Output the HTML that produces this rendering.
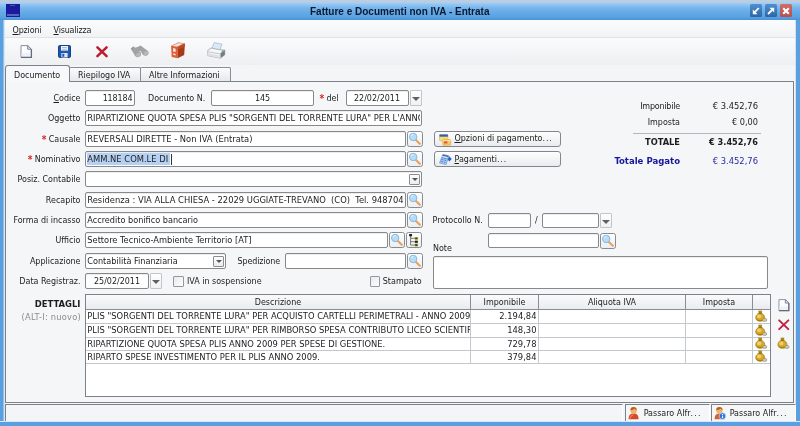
<!DOCTYPE html><html><head><meta charset="utf-8"><title>Fatture e Documenti non IVA - Entrata</title><style>
*{box-sizing:border-box;margin:0;padding:0}
html,body{width:800px;height:426px;overflow:hidden;background:#f4f5f7}
body{position:relative;font-family:"DejaVu Sans Condensed","Liberation Sans",sans-serif;font-size:8.9px;color:#1c1c1c;line-height:12px}
.a{position:absolute;white-space:pre}
.t{position:absolute;white-space:pre;height:12px}
.r{text-align:right}
.U{font-size:9.3px}
.inp{position:absolute;background:#fff;border:1px solid #86888b;border-radius:2px;height:16px;box-shadow:inset 0 1px 0 rgba(0,0,0,.07)}
.clip{position:absolute;overflow:hidden;height:12px;white-space:pre}
.ibtn{position:absolute;width:16px;height:16px;border:1px solid #878a8e;border-radius:2.5px;background:linear-gradient(#fefefe,#eceef1)}
.ibtn svg{position:absolute;left:0;top:0}
.dd{position:absolute;width:12px;height:16px;border:1px solid #c2c5c9;border-radius:1px;background:linear-gradient(#ffffff,#f0f1f3)}
.dd:after{content:"";position:absolute;left:1px;top:6px;border:4px solid transparent;border-top:4px solid #606060;border-bottom:0}
.cbx{position:absolute;width:11px;height:11px;border:1px solid #8f9398;border-radius:1px;background:#fff}
.cb{position:absolute;width:11px;height:11px;border:1px solid #94989e;border-radius:1px;background:linear-gradient(135deg,#e9eaec,#fdfdfd)}
.red{color:#d82424;font-size:10px;font-weight:bold;margin-right:2.3px;position:relative;top:1px}
.btn{position:absolute;height:16px;border:1px solid #83878d;border-radius:3px;background:linear-gradient(#fefefe,#e9ebee)}
.ic{position:absolute;overflow:visible}
u{text-decoration:underline}
</style></head><body><div id="w" style="position:absolute;left:0;top:0;width:800px;height:426px;will-change:transform">
<div class="a" style="left:0;top:0;width:800px;height:21px;background:linear-gradient(#c8ccd1 0,#bccde0 1.4px,#a8d0f6 2.4px,#92c6f2 4.5px,#76b5ec 8px,#63a9e6 13px,#5aa2e2 17px,#5096da 19px,#4a8fd4 20.5px)"></div>
<div class="a" style="left:310px;top:6px;font-family:'Liberation Sans',sans-serif;font-weight:bold;font-size:10px;color:#0c1830">Fatture e Documenti non IVA - Entrata</div>
<div class="a" style="left:0;top:20px;width:5px;height:406px;background:linear-gradient(90deg,#5aa0e0 0,#5aa0e0 3px,#cfe3f6 4px,#dbe9f7 5px)"></div>
<div class="a" style="left:795px;top:20px;width:5px;height:406px;background:linear-gradient(90deg,#cfe3f6 0,#cfe3f6 1px,#5aa0e0 1px)"></div>
<div class="a" style="left:0;top:421px;width:800px;height:5px;background:linear-gradient(#d6e8f8 0,#d6e8f8 1px,#5aa0e0 1px)"></div>
<div class="a" style="left:6px;top:4px;width:14px;height:13px;background:#1a1a9a"></div>
<div class="a" style="left:7px;top:14px;width:12px;height:2px;background:#6a74c8;opacity:.8"></div>
<div class="a" style="left:10px;top:5px;width:5px;height:1px;background:#5a64b8;opacity:.8"></div>
<div class="a" style="left:750px;top:4px;width:12px;height:13px;border-radius:1.5px;background:linear-gradient(#4f8fd0,#2c65a4)"><svg width="12" height="12" viewBox="0 0 12 12" style="position:absolute;left:0;top:.5px"><path d="M8.8 3L3.8 8.2" stroke="#fff" stroke-width="1.8"/><path d="M2.8 4.4v4.8h4.8z" fill="#fff"/></svg></div>
<div class="a" style="left:765px;top:4px;width:12px;height:13px;border-radius:1.5px;background:linear-gradient(#4f8fd0,#2c65a4)"><svg width="12" height="12" viewBox="0 0 12 12" style="position:absolute;left:0;top:.5px"><path d="M3 9L8.2 3.8" stroke="#fff" stroke-width="1.8"/><path d="M4.4 2.8h4.8v4.8z" fill="#fff"/></svg></div>
<div class="a" style="left:780px;top:4px;width:12px;height:13px;border-radius:1.5px;background:linear-gradient(#cc7068,#b4504c)"><svg width="12" height="12" viewBox="0 0 12 12" style="position:absolute;left:0;top:.5px"><path d="M3.2 3.2l5.6 5.6M8.8 3.2l-5.6 5.6" stroke="#fff" stroke-width="2.1"/></svg></div>
<div class="a" style="left:5px;top:20px;width:790px;height:18px;background:linear-gradient(#fbfcfd,#f0f2f5)"></div>
<div class="a" style="left:5px;top:37px;width:790px;height:1px;background:#e0e2e6"></div>
<div class="t " style="left:12.5px;top:24px;letter-spacing:-.15px"><u>O</u>pzioni</div>
<div class="t " style="left:53.5px;top:24px;letter-spacing:-.15px"><u>V</u>isualizza</div>
<div class="a" style="left:5px;top:38px;width:790px;height:27px;background:linear-gradient(#fbfbfc,#eeeff2)"></div>
<svg class="ic" style="left:20px;top:44.5px" width="12.6" height="13.2" viewBox="0 0 12.6 13.2"><path d="M1 .6h6.7l3.7 3.7v8H1z" fill="#fdfdfe" stroke="#8a90a2" stroke-width="1"/><path d="M1.6 8h9.2v4.3H1.6z" fill="#eef1f7"/><path d="M11.4 4.3v8H1" fill="none" stroke="#646b7e" stroke-width="1.3"/><path d="M7.7 .6v3.7h3.7z" fill="#dfe4ee" stroke="#747b8e" stroke-width=".9"/></svg>
<svg class="ic" style="left:57.5px;top:44.5px" width="13" height="13" viewBox="0 0 13 13"><rect x=".5" y=".5" width="12" height="12" rx="1.2" fill="#1f58b0" stroke="#163f86"/><rect x="3" y="1" width="7" height="4.6" fill="#f2f5fa"/><rect x="4" y="2.2" width="5" height=".8" fill="#9fb0c8"/><rect x="4" y="3.8" width="5" height=".8" fill="#9fb0c8"/><rect x="3.4" y="8" width="6.2" height="4.5" fill="#dfe6f2"/><rect x="4.3" y="8.8" width="2" height="3" fill="#1f58b0"/></svg>
<svg class="ic" style="left:95.5px;top:45.5px" width="12" height="11.6" viewBox="0 0 12 11.6"><path d="M1.4 1.4L10.6 10.2M10.6 1.4L1.4 10.2" stroke="#bc1c2e" stroke-width="2.5" stroke-linecap="round"/></svg>
<svg class="ic" style="left:130px;top:45px" width="19" height="12" viewBox="0 0 19 12.5"><g fill="#a3a3a3"><path d="M8.2 2.6L10.6 .6 18.6 6.6Q19.8 9.4 17.4 10.9 14.6 12 13 10.2z"/><path d="M.4 4L3 1.4 10.8 7.8Q12 10.8 9.4 12.3 6.6 13.3 5 11.4z"/><path d="M4 3l5-1.4 3 4-5 1.5z"/></g><ellipse cx="8.3" cy="10" rx="2.7" ry="1.9" fill="#b7b7b7" transform="rotate(-32 8.3 10)"/><ellipse cx="16.3" cy="8.6" rx="2.7" ry="1.9" fill="#b7b7b7" transform="rotate(-32 16.3 8.6)"/><path d="M1.2 4.2L3 2.4" stroke="#8c8c8c" stroke-width="1"/><path d="M8.8 2.8L10.5 1.4" stroke="#8c8c8c" stroke-width="1"/></svg>
<svg class="ic" style="left:171px;top:41.5px" width="14" height="16.5" viewBox="0 0 14 16.5"><path d="M.1 3.8L7.3 .2l6.6 1.2L6.6 5.1z" fill="#d08468"/><path d="M1.6 3.7L7.4 .9l4.6.9L6.7 4.5z" fill="#f1e2da"/><path d="M.1 3.8L6.6 5.1v11.2L.7 14.9z" fill="#e25c34"/><path d="M6.6 5.1L13.9 1.4l-.7 11.6L6.6 16.3z" fill="#a83818"/><path d="M6.6 5.1L13.9 1.4l-.2 3L6.6 8.2z" fill="#be4824"/><path d="M2.1 6.1l2.5.6v3.4l-2.5-.7z" fill="#f8ece6"/><path d="M2.2 11.2l2.4.7v1.6l-2.4-.7z" fill="#f8ece6"/></svg>
<svg class="ic" style="left:206.5px;top:42px" width="18.5" height="16.5" viewBox="0 0 18.5 16.5"><path d="M4.6 7L7.2 .6l7.8 1.6-2.2 6z" fill="#d6ebfa" stroke="#a6b6c6" stroke-width=".7"/><path d="M.8 8.4l3.2-2.4 9.2 1.8 4.6.2v4.8l-4.4 3.4L.8 13.6z" fill="#f6f7f8" stroke="#a0a4aa" stroke-width=".8"/><path d="M13.4 11.4l4.4-3.2v4.6l-4.4 3.4z" fill="#777b80"/><path d="M.8 11l12.6 2.4v2.8L.8 13.6z" fill="#dfe1e4"/><path d="M13.4 11.4l4.4-3.2" stroke="#9a9ea4" stroke-width=".8"/><circle cx="15.6" cy="9.2" r=".9" fill="#58b058"/><path d="M1.6 9.8l11.4 2.1" stroke="#b6babf" stroke-width=".8"/></svg>
<div class="a" style="left:5px;top:81px;width:789px;height:322px;border:1px solid #7e8288;background:#f5f6f8"></div>
<div class="a" style="left:69px;top:67px;width:72px;height:15px;border:1px solid #8a8e94;border-bottom-color:#7e8288;border-radius:2px 2px 0 0;background:linear-gradient(#fcfcfd,#e6e8eb)"></div>
<div class="a" style="left:140px;top:67px;width:91px;height:15px;border:1px solid #8a8e94;border-bottom-color:#7e8288;border-radius:2px 2px 0 0;background:linear-gradient(#fcfcfd,#e6e8eb)"></div>
<div class="a" style="left:5px;top:65px;width:65px;height:17px;border:1px solid #7e8288;border-bottom:0;border-radius:3px 3px 0 0;background:#f7f8fa"></div>
<div class="t " style="left:14px;top:69px;">Documento</div>
<div class="t " style="left:78px;top:69px;">Riepilogo IVA</div>
<div class="t " style="left:149px;top:69px;">Altre Informazioni</div>
<div class="t r " style="right:719.5px;top:92px;"><u>C</u>odice</div>
<div class="t r " style="right:719.5px;top:112px;">Oggetto</div>
<div class="t r " style="right:719.5px;top:133px;"><span class="red">*</span>Causale</div>
<div class="t r " style="right:719.5px;top:153px;"><span class="red">*</span>Nominativo</div>
<div class="t r " style="right:719.5px;top:173px;">Posiz. Contabile</div>
<div class="t r " style="right:719.5px;top:194px;">Recapito</div>
<div class="t r " style="right:719.5px;top:214px;">Forma di incasso</div>
<div class="t r " style="right:719.5px;top:234px;">Ufficio</div>
<div class="t r " style="right:719.5px;top:255px;">Applicazione</div>
<div class="t r " style="right:719.5px;top:275px;">Data Registraz.</div>
<div class="inp" style="left:85px;top:90px;width:50px;height:16px"></div>
<div class="clip " style="left:87px;top:92px;width:45.5px;text-align:right;letter-spacing:-.1px">118184</div>
<div class="t " style="left:148px;top:92px;">Documento N.</div>
<div class="inp" style="left:211px;top:90px;width:103px;height:16px"></div>
<div class="clip " style="left:212px;top:92px;width:101px;text-align:center;">145</div>
<div class="t " style="left:319.5px;top:92px;"><span class="red">*</span>del</div>
<div class="inp" style="left:346px;top:90px;width:63px;height:16px"></div>
<div class="clip " style="left:347px;top:92px;width:60px;text-align:center;">22/02/2011</div>
<div class="dd" style="left:410px;top:90px;width:12px"></div>
<div class="inp" style="left:85px;top:110px;width:337px;height:16px"></div>
<div class="clip U" style="left:87.3px;top:112px;width:333px;text-align:left;">RIPARTIZIONE QUOTA SPESA PLIS "SORGENTI DEL TORRENTE LURA" PER L'ANNO 2009</div>
<div class="inp" style="left:85px;top:131px;width:321px;height:16px"></div>
<div class="clip U" style="left:87.3px;top:133px;width:317px;text-align:left;">REVERSALI DIRETTE - Non IVA (Entrata)</div>
<div class="inp" style="left:85px;top:151px;width:321px;height:16px"></div>
<div class="a" style="left:87px;top:153px;width:82.5px;height:12px;background:#b4d1f3"></div>
<div class="clip U" style="left:87.3px;top:153px;width:317px;text-align:left;">AMM.NE COM.LE DI </div>
<div class="a" style="left:171px;top:154px;width:1px;height:11px;background:#333"></div>
<div class="inp" style="left:85px;top:171px;width:337px;height:16px"></div>
<div class="a" style="left:409px;top:174px;width:11px;height:11px;border:1px solid #8a8e94;border-radius:1px;background:linear-gradient(#fdfdfd,#ececee)"></div>
<div class="a" style="left:411.5px;top:178px;border:3px solid transparent;border-top:3.5px solid #555;border-bottom:0"></div>
<div class="inp" style="left:85px;top:192px;width:321px;height:16px"></div>
<div class="clip U" style="left:87.3px;top:194px;width:317px;text-align:left;">Residenza : VIA ALLA CHIESA - 22029 UGGIATE-TREVANO  (CO)  Tel. 948704</div>
<div class="inp" style="left:85px;top:212px;width:321px;height:16px"></div>
<div class="clip " style="left:87.3px;top:214px;width:317px;text-align:left;font-size:9.05px">Accredito bonifico bancario</div>
<div class="inp" style="left:85px;top:232px;width:303px;height:16px"></div>
<div class="clip " style="left:87.3px;top:234px;width:299px;text-align:left;font-size:9.2px">Settore Tecnico-Ambiente Territorio [AT]</div>
<div class="inp" style="left:85px;top:253px;width:141px;height:16px"></div>
<div class="clip " style="left:87.3px;top:255px;width:120px;text-align:left;font-size:9.05px">Contabilità Finanziaria</div>
<div class="a" style="left:213px;top:256px;width:11px;height:11px;border:1px solid #8a8e94;border-radius:1px;background:linear-gradient(#fdfdfd,#ececee)"></div>
<div class="a" style="left:215.5px;top:260px;border:3px solid transparent;border-top:3.5px solid #555;border-bottom:0"></div>
<div class="t " style="left:237.5px;top:255px;letter-spacing:-.1px">Spedizione</div>
<div class="inp" style="left:285px;top:253px;width:121px;height:16px"></div>
<div class="inp" style="left:85px;top:273px;width:64px;height:16px"></div>
<div class="clip " style="left:86px;top:275px;width:62px;text-align:center;">25/02/2011</div>
<div class="dd" style="left:150px;top:273px;width:12px"></div>
<div class="cb" style="left:173px;top:276px"></div>
<div class="t " style="left:187px;top:275px;">IVA in sospensione</div>
<div class="cb" style="left:370px;top:276px;width:10px"></div>
<div class="t " style="left:382.8px;top:275px;">Stampato</div>
<div class="ibtn" style="left:407px;top:131px"><svg width="13" height="14" viewBox="0 0 13 14"><path d="M7.4 7.4L11.8 11.8" stroke="#e9a25e" stroke-width="2.1" stroke-linecap="round"/><circle cx="5.2" cy="5" r="3.7" fill="#b8dcf5" stroke="#88b8de" stroke-width="1"/><path d="M3 4.2a2.6 2.6 0 0 1 2.4-1.8" stroke="#eaf6fd" stroke-width="1" fill="none"/></svg></div>
<div class="ibtn" style="left:407px;top:151px"><svg width="13" height="14" viewBox="0 0 13 14"><path d="M7.4 7.4L11.8 11.8" stroke="#e9a25e" stroke-width="2.1" stroke-linecap="round"/><circle cx="5.2" cy="5" r="3.7" fill="#b8dcf5" stroke="#88b8de" stroke-width="1"/><path d="M3 4.2a2.6 2.6 0 0 1 2.4-1.8" stroke="#eaf6fd" stroke-width="1" fill="none"/></svg></div>
<div class="ibtn" style="left:407px;top:192px"><svg width="13" height="14" viewBox="0 0 13 14"><path d="M7.4 7.4L11.8 11.8" stroke="#e9a25e" stroke-width="2.1" stroke-linecap="round"/><circle cx="5.2" cy="5" r="3.7" fill="#b8dcf5" stroke="#88b8de" stroke-width="1"/><path d="M3 4.2a2.6 2.6 0 0 1 2.4-1.8" stroke="#eaf6fd" stroke-width="1" fill="none"/></svg></div>
<div class="ibtn" style="left:407px;top:212px"><svg width="13" height="14" viewBox="0 0 13 14"><path d="M7.4 7.4L11.8 11.8" stroke="#e9a25e" stroke-width="2.1" stroke-linecap="round"/><circle cx="5.2" cy="5" r="3.7" fill="#b8dcf5" stroke="#88b8de" stroke-width="1"/><path d="M3 4.2a2.6 2.6 0 0 1 2.4-1.8" stroke="#eaf6fd" stroke-width="1" fill="none"/></svg></div>
<div class="ibtn" style="left:389px;top:232px"><svg width="13" height="14" viewBox="0 0 13 14"><path d="M7.4 7.4L11.8 11.8" stroke="#e9a25e" stroke-width="2.1" stroke-linecap="round"/><circle cx="5.2" cy="5" r="3.7" fill="#b8dcf5" stroke="#88b8de" stroke-width="1"/><path d="M3 4.2a2.6 2.6 0 0 1 2.4-1.8" stroke="#eaf6fd" stroke-width="1" fill="none"/></svg></div>
<div class="ibtn" style="left:407px;top:253px"><svg width="13" height="14" viewBox="0 0 13 14"><path d="M7.4 7.4L11.8 11.8" stroke="#e9a25e" stroke-width="2.1" stroke-linecap="round"/><circle cx="5.2" cy="5" r="3.7" fill="#b8dcf5" stroke="#88b8de" stroke-width="1"/><path d="M3 4.2a2.6 2.6 0 0 1 2.4-1.8" stroke="#eaf6fd" stroke-width="1" fill="none"/></svg></div>
<div class="ibtn" style="left:600px;top:233px"><svg width="13" height="14" viewBox="0 0 13 14"><path d="M7.4 7.4L11.8 11.8" stroke="#e9a25e" stroke-width="2.1" stroke-linecap="round"/><circle cx="5.2" cy="5" r="3.7" fill="#b8dcf5" stroke="#88b8de" stroke-width="1"/><path d="M3 4.2a2.6 2.6 0 0 1 2.4-1.8" stroke="#eaf6fd" stroke-width="1" fill="none"/></svg></div>
<div class="ibtn" style="left:406px;top:232px;width:16px"><svg width="13" height="14" viewBox="0 0 13 14.5"><path d="M3.5 3v9.5M3.5 5.5h5M3.5 9h5M3.5 12.5h5" stroke="#6a6a6a" stroke-width=".9" fill="none"/><rect x="2" y="1" width="3" height="2.4" fill="#222"/><rect x="8" y="4.4" width="3" height="2.3" fill="#3a3a10" stroke="#c8b830" stroke-width=".5"/><rect x="8" y="7.9" width="3" height="2.3" fill="#222"/><rect x="8" y="11.3" width="3" height="2.3" fill="#3a3a10" stroke="#c8b830" stroke-width=".5"/></svg></div>
<div class="btn" style="left:434px;top:131px;width:127px"><svg class="ic" style="left:4px;top:1.5px" width="12.5" height="11.5" viewBox="0 0 12.5 11.5"><rect x=".5" y=".5" width="8.4" height="6.4" rx=".8" fill="#f4dc78" stroke="#d8b850" stroke-width=".6"/><rect x=".5" y=".5" width="8.4" height="2.2" fill="#2f5fc4"/><rect x="3.7" y="5.6" width="8" height="5.6" rx=".8" fill="#f6c860" stroke="#e0a040" stroke-width=".6"/><rect x="5" y="7.2" width="3.4" height="2.2" fill="#e8502c"/><rect x="3.7" y="6.2" width="8" height="1" fill="#fae8a8"/></svg></div>
<div class="t " style="left:454.5px;top:132px;"><u>O</u>pzioni di pagamento<span style="letter-spacing:.9px">...</span></div>
<div class="btn" style="left:434px;top:151px;width:127px"><svg class="ic" style="left:3.5px;top:1.5px" width="13" height="11" viewBox="0 0 13 11"><path d="M8.6 3.4h1.4v-1.4l2.8 2.9-2.8 2.9v-1.4h-1.8z" fill="#2a62bc"/><path d="M3.8 .5L9.6 1.7 7.2 10.6.5 9z" fill="#a4c6f0" stroke="#6a9ad8" stroke-width=".7"/><path d="M3.8 .5L9.6 1.7 9.2 3 3.4 1.8z" fill="#4a6890"/><path d="M2.9 3.6l4.6 1M2.4 5.4l2 .5M5.4 6.1l1.6.4M1.9 7.4l2 .5M4.9 8.1l1.6.4" stroke="#4a86d4" stroke-width="1"/><path d="M3.2 2.6l5 1.1" stroke="#e4f0fc" stroke-width=".9"/></svg></div>
<div class="t " style="left:454.5px;top:153px;"><u>P</u>agamenti<span style="letter-spacing:.9px">...</span></div>
<div class="t " style="left:432.5px;top:214px;">Protocollo N.</div>
<div class="inp" style="left:488px;top:213px;width:43px;height:15px"></div>
<div class="t " style="left:535px;top:214px;">/</div>
<div class="inp" style="left:542px;top:213px;width:57px;height:15px"></div>
<div class="dd" style="height:15px;left:600px;top:213px;width:12px"></div>
<div class="inp" style="left:488px;top:233px;width:111px;height:15px"></div>
<div class="t " style="left:433px;top:242px;">Note</div>
<div class="inp" style="left:433px;top:256px;width:335px;height:33px"></div>
<div class="t r " style="right:120px;top:100px;letter-spacing:-.2px">Imponibile</div>
<div class="t r " style="right:42px;top:100px;font-size:9.3px">€ 3.452,76</div>
<div class="t r " style="right:120px;top:116px;">Imposta</div>
<div class="t r " style="right:42px;top:116px;font-size:9.1px">€ 0,00</div>
<div class="a" style="left:633px;top:133px;width:128px;height:1px;background:#b4b7bc"></div>
<div class="t r " style="right:120px;top:136px;font-weight:bold;font-size:9.2px">TOTALE</div>
<div class="t r " style="right:42px;top:136px;font-weight:bold;font-size:9.1px">€ 3.452,76</div>
<div class="t r " style="right:120px;top:155px;font-weight:bold;font-size:9.5px;color:#16169a">Totale Pagato</div>
<div class="t r " style="right:42px;top:155px;color:#2a2aa8;font-size:9.3px">€ 3.452,76</div>
<div class="t r " style="right:719.5px;top:298px;font-weight:bold;font-size:9.4px">DETTAGLI</div>
<div class="t r " style="right:719px;top:311px;color:#8c8c8c;font-size:9.2px;letter-spacing:.25px">(ALT-I: nuovo)</div>
<div class="a" style="left:85px;top:294px;width:686px;height:103px;border:1px solid #7e8288;background:#fff"></div>
<div class="a" style="left:86px;top:295px;width:684px;height:15px;background:linear-gradient(#fbfbfc,#e9ebee);border-bottom:1px solid #8a8e94"></div>
<div class="t" style="left:86px;top:296px;width:384px;text-align:center">Descrizione</div>
<div class="a" style="left:470px;top:295px;width:1px;height:15px;background:#8a8e94"></div>
<div class="a" style="left:470px;top:310px;width:1px;height:54px;background:#c4c7cc"></div>
<div class="t" style="left:471px;top:296px;width:67px;text-align:center">Imponibile</div>
<div class="a" style="left:538px;top:295px;width:1px;height:15px;background:#8a8e94"></div>
<div class="a" style="left:538px;top:310px;width:1px;height:54px;background:#c4c7cc"></div>
<div class="t" style="left:539px;top:296px;width:146px;text-align:center">Aliquota IVA</div>
<div class="a" style="left:685px;top:295px;width:1px;height:15px;background:#8a8e94"></div>
<div class="a" style="left:685px;top:310px;width:1px;height:54px;background:#c4c7cc"></div>
<div class="t" style="left:686px;top:296px;width:66px;text-align:center">Imposta</div>
<div class="a" style="left:752px;top:295px;width:1px;height:15px;background:#8a8e94"></div>
<div class="a" style="left:752px;top:310px;width:1px;height:54px;background:#c4c7cc"></div>
<div class="clip U" style="left:87.3px;top:310px;width:382.7px;text-align:left;">PLIS "SORGENTI DEL TORRENTE LURA" PER ACQUISTO CARTELLI PERIMETRALI - ANNO 2009</div>
<div class="t r " style="right:263.5px;top:310px;font-size:9.3px">2.194,84</div>
<div class="a" style="left:86px;top:323px;width:684px;height:1px;background:#c4c7cc"></div>
<svg class="ic" style="left:755px;top:310px" width="12" height="12" viewBox="0 0 12 12"><path d="M3.6 .9h3.2l-.6 2.3h-2z" fill="#c09018" stroke="#94700f" stroke-width=".5"/><path d="M5.2 2.9C8 3.4 9.7 5.6 9.7 7.6c0 2.2-1.6 3.7-4.5 3.7S.7 9.8.7 7.6c0-2 1.7-4.2 4.5-4.7z" fill="#d8a826" stroke="#9a7612" stroke-width=".7"/><ellipse cx="4.1" cy="6.3" rx="2.1" ry="1.9" fill="#efcf68"/><path d="M1.1 9.1a4.5 3.2 0 0 0 8.2 0 6 3 0 0 1-8.2 0z" fill="#a47a12"/><rect x="3.4" y="2.7" width="3.6" height=".9" fill="#8a660c"/><ellipse cx="9.7" cy="9.9" rx="2.1" ry="1.5" fill="#e2dcc0" stroke="#8a8468" stroke-width=".7"/><path d="M8.8 9.9h1.8" stroke="#a8a080" stroke-width=".6"/></svg>
<div class="clip U" style="left:87.3px;top:324px;width:382.7px;text-align:left;">PLIS "SORGENTI DEL TORRENTE LURA" PER RIMBORSO SPESA CONTRIBUTO LICEO SCIENTIFICO</div>
<div class="t r " style="right:263.5px;top:324px;font-size:9.3px">148,30</div>
<div class="a" style="left:86px;top:337px;width:684px;height:1px;background:#c4c7cc"></div>
<svg class="ic" style="left:755px;top:324px" width="12" height="12" viewBox="0 0 12 12"><path d="M3.6 .9h3.2l-.6 2.3h-2z" fill="#c09018" stroke="#94700f" stroke-width=".5"/><path d="M5.2 2.9C8 3.4 9.7 5.6 9.7 7.6c0 2.2-1.6 3.7-4.5 3.7S.7 9.8.7 7.6c0-2 1.7-4.2 4.5-4.7z" fill="#d8a826" stroke="#9a7612" stroke-width=".7"/><ellipse cx="4.1" cy="6.3" rx="2.1" ry="1.9" fill="#efcf68"/><path d="M1.1 9.1a4.5 3.2 0 0 0 8.2 0 6 3 0 0 1-8.2 0z" fill="#a47a12"/><rect x="3.4" y="2.7" width="3.6" height=".9" fill="#8a660c"/><ellipse cx="9.7" cy="9.9" rx="2.1" ry="1.5" fill="#e2dcc0" stroke="#8a8468" stroke-width=".7"/><path d="M8.8 9.9h1.8" stroke="#a8a080" stroke-width=".6"/></svg>
<div class="clip U" style="left:87.3px;top:338px;width:382.7px;text-align:left;">RIPARTIZIONE QUOTA SPESA PLIS ANNO 2009 PER SPESE DI GESTIONE.</div>
<div class="t r " style="right:263.5px;top:338px;font-size:9.3px">729,78</div>
<div class="a" style="left:86px;top:350px;width:684px;height:1px;background:#c4c7cc"></div>
<svg class="ic" style="left:755px;top:337px" width="12" height="12" viewBox="0 0 12 12"><path d="M3.6 .9h3.2l-.6 2.3h-2z" fill="#c09018" stroke="#94700f" stroke-width=".5"/><path d="M5.2 2.9C8 3.4 9.7 5.6 9.7 7.6c0 2.2-1.6 3.7-4.5 3.7S.7 9.8.7 7.6c0-2 1.7-4.2 4.5-4.7z" fill="#d8a826" stroke="#9a7612" stroke-width=".7"/><ellipse cx="4.1" cy="6.3" rx="2.1" ry="1.9" fill="#efcf68"/><path d="M1.1 9.1a4.5 3.2 0 0 0 8.2 0 6 3 0 0 1-8.2 0z" fill="#a47a12"/><rect x="3.4" y="2.7" width="3.6" height=".9" fill="#8a660c"/><ellipse cx="9.7" cy="9.9" rx="2.1" ry="1.5" fill="#e2dcc0" stroke="#8a8468" stroke-width=".7"/><path d="M8.8 9.9h1.8" stroke="#a8a080" stroke-width=".6"/></svg>
<div class="clip U" style="left:87.3px;top:351px;width:382.7px;text-align:left;">RIPARTO SPESE INVESTIMENTO PER IL PLIS ANNO 2009.</div>
<div class="t r " style="right:263.5px;top:351px;font-size:9.3px">379,84</div>
<div class="a" style="left:86px;top:363px;width:684px;height:1px;background:#c4c7cc"></div>
<svg class="ic" style="left:755px;top:350px" width="12" height="12" viewBox="0 0 12 12"><path d="M3.6 .9h3.2l-.6 2.3h-2z" fill="#c09018" stroke="#94700f" stroke-width=".5"/><path d="M5.2 2.9C8 3.4 9.7 5.6 9.7 7.6c0 2.2-1.6 3.7-4.5 3.7S.7 9.8.7 7.6c0-2 1.7-4.2 4.5-4.7z" fill="#d8a826" stroke="#9a7612" stroke-width=".7"/><ellipse cx="4.1" cy="6.3" rx="2.1" ry="1.9" fill="#efcf68"/><path d="M1.1 9.1a4.5 3.2 0 0 0 8.2 0 6 3 0 0 1-8.2 0z" fill="#a47a12"/><rect x="3.4" y="2.7" width="3.6" height=".9" fill="#8a660c"/><ellipse cx="9.7" cy="9.9" rx="2.1" ry="1.5" fill="#e2dcc0" stroke="#8a8468" stroke-width=".7"/><path d="M8.8 9.9h1.8" stroke="#a8a080" stroke-width=".6"/></svg>
<svg class="ic" style="left:777.5px;top:299px" width="12" height="12.5" viewBox="0 0 12.6 13.2"><path d="M1 .6h6.7l3.7 3.7v8H1z" fill="#fdfdfe" stroke="#8a90a2" stroke-width="1"/><path d="M1.6 8h9.2v4.3H1.6z" fill="#eef1f7"/><path d="M11.4 4.3v8H1" fill="none" stroke="#646b7e" stroke-width="1.3"/><path d="M7.7 .6v3.7h3.7z" fill="#dfe4ee" stroke="#747b8e" stroke-width=".9"/></svg>
<svg class="ic" style="left:778px;top:318.5px" width="11.5" height="11.5" viewBox="0 0 12 11.6"><path d="M1.2 1.2L10.8 10.4M10.8 1.2L1.2 10.4" stroke="#c0203a" stroke-width="2" stroke-linecap="round"/></svg>
<svg class="ic" style="left:776.5px;top:337px" width="12.5" height="12" viewBox="0 0 12 12"><path d="M3.6 .9h3.2l-.6 2.3h-2z" fill="#c09018" stroke="#94700f" stroke-width=".5"/><path d="M5.2 2.9C8 3.4 9.7 5.6 9.7 7.6c0 2.2-1.6 3.7-4.5 3.7S.7 9.8.7 7.6c0-2 1.7-4.2 4.5-4.7z" fill="#d8a826" stroke="#9a7612" stroke-width=".7"/><ellipse cx="4.1" cy="6.3" rx="2.1" ry="1.9" fill="#efcf68"/><path d="M1.1 9.1a4.5 3.2 0 0 0 8.2 0 6 3 0 0 1-8.2 0z" fill="#a47a12"/><rect x="3.4" y="2.7" width="3.6" height=".9" fill="#8a660c"/><ellipse cx="9.7" cy="9.9" rx="2.1" ry="1.5" fill="#e2dcc0" stroke="#8a8468" stroke-width=".7"/><path d="M8.8 9.9h1.8" stroke="#a8a080" stroke-width=".6"/></svg>
<div class="a" style="left:5px;top:403px;width:790px;height:18px;background:#f4f5f7"></div>
<div class="a" style="left:5px;top:404px;width:618px;height:17px;border-top:1px solid #7e8288;border-left:1px solid #7e8288;border-right:1px solid #fff"></div>
<div class="a" style="left:625px;top:404px;width:85px;height:17px;border-top:1px solid #7e8288;border-left:1px solid #7e8288;border-right:1px solid #fff;background:#f5f6f8"><svg class="ic" style="left:2px;top:0.5px" width="12" height="14" viewBox="0 0 12.5 14"><path d="M.6 13.4c0-4 2-5.8 5.2-5.8s5.2 1.8 5.2 5.8z" fill="#d44a24"/><path d="M2 13.4c.2-2.6 1.4-4.2 3.8-4.2" stroke="#ee7c54" stroke-width="1.2" fill="none"/><circle cx="5.8" cy="4.3" r="3.3" fill="#f2b468"/><path d="M2.5 4.1a3.3 3.3 0 0 1 6.6 0c-1-.2-1.6-1-2-1.8-1 1.2-2.8 1.8-4.6 1.8z" fill="#b8601c"/></svg></div>
<div class="t " style="left:643.7px;top:407px;">Passaro Alfr<span style="letter-spacing:1.2px">...</span></div>
<div class="a" style="left:711px;top:404px;width:85px;height:17px;border-top:1px solid #7e8288;border-left:1px solid #7e8288;border-right:1px solid #fff;background:#f5f6f8"><svg class="ic" style="left:2px;top:0.5px" width="12" height="14" viewBox="0 0 12.5 14"><path d="M.6 13.4c0-4 2-5.8 5.2-5.8s5.2 1.8 5.2 5.8z" fill="#d8602c"/><circle cx="5.6" cy="4.3" r="3.3" fill="#f2b468"/><path d="M2.3 4.1a3.3 3.3 0 0 1 6.6 0c-1-.2-1.6-1-2-1.8-1 1.2-2.8 1.8-4.6 1.8z" fill="#b8601c"/><circle cx="8.8" cy="10.2" r="3.4" fill="#2a74dc" stroke="#cfe2f8" stroke-width=".7"/><rect x="8.25" y="9.7" width="1.2" height="2.6" fill="#fff"/><rect x="8.25" y="8" width="1.2" height="1.1" fill="#fff"/></svg></div>
<div class="t " style="left:729.7px;top:407px;">Passaro Alfr<span style="letter-spacing:1.2px">...</span></div>
</div></body></html>
